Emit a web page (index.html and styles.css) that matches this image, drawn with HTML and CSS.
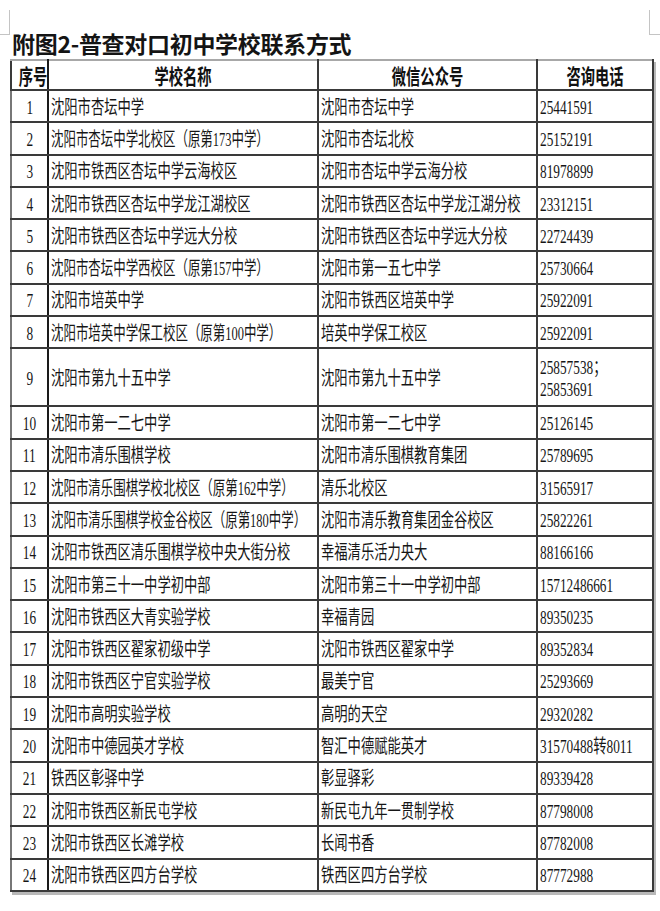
FILE: index.html
```html
<!DOCTYPE html>
<html lang="zh-CN">
<head>
<meta charset="utf-8">
<title>附图2-普查对口初中学校联系方式</title>
<link rel="stylesheet" href="styles.css">
</head>
<body>
<div class="page">
  <span class="mark mark-left"></span>
  <span class="mark mark-right"></span>
  <h1 class="title">附图2-普查对口初中学校联系方式</h1>
  <table class="sheet">
    <colgroup>
      <col class="c-no"><col class="c-name"><col class="c-wx"><col class="c-tel">
    </colgroup>
    <thead>
      <tr>
        <th><span class="h">序号</span></th>
        <th><span class="h">学校名称</span></th>
        <th><span class="h">微信公众号</span></th>
        <th><span class="h">咨询电话</span></th>
      </tr>
    </thead>
    <tbody>
      <tr><td class="no"><span class="n">1</span></td><td><span class="t">沈阳市杏坛中学</span></td><td><span class="t">沈阳市杏坛中学</span></td><td><span class="t">25441591</span></td></tr>
      <tr><td class="no"><span class="n">2</span></td><td><span class="t narrow">沈阳市杏坛中学北校区（原第173中学）</span></td><td><span class="t">沈阳市杏坛北校</span></td><td><span class="t">25152191</span></td></tr>
      <tr><td class="no"><span class="n">3</span></td><td><span class="t">沈阳市铁西区杏坛中学云海校区</span></td><td><span class="t">沈阳市杏坛中学云海分校</span></td><td><span class="t">81978899</span></td></tr>
      <tr><td class="no"><span class="n">4</span></td><td><span class="t">沈阳市铁西区杏坛中学龙江湖校区</span></td><td><span class="t">沈阳市铁西区杏坛中学龙江湖分校</span></td><td><span class="t">23312151</span></td></tr>
      <tr><td class="no"><span class="n">5</span></td><td><span class="t">沈阳市铁西区杏坛中学远大分校</span></td><td><span class="t">沈阳市铁西区杏坛中学远大分校</span></td><td><span class="t">22724439</span></td></tr>
      <tr><td class="no"><span class="n">6</span></td><td><span class="t narrow">沈阳市杏坛中学西校区（原第157中学）</span></td><td><span class="t">沈阳市第一五七中学</span></td><td><span class="t">25730664</span></td></tr>
      <tr><td class="no"><span class="n">7</span></td><td><span class="t">沈阳市培英中学</span></td><td><span class="t">沈阳市铁西区培英中学</span></td><td><span class="t">25922091</span></td></tr>
      <tr><td class="no"><span class="n">8</span></td><td><span class="t narrow">沈阳市培英中学保工校区（原第100中学）</span></td><td><span class="t">培英中学保工校区</span></td><td><span class="t">25922091</span></td></tr>
      <tr class="tall"><td class="no"><span class="n">9</span></td><td><span class="t">沈阳市第九十五中学</span></td><td><span class="t">沈阳市第九十五中学</span></td><td><span class="t">25857538；<br>25853691</span></td></tr>
      <tr><td class="no"><span class="n">10</span></td><td><span class="t">沈阳市第一二七中学</span></td><td><span class="t">沈阳市第一二七中学</span></td><td><span class="t">25126145</span></td></tr>
      <tr><td class="no"><span class="n">11</span></td><td><span class="t">沈阳市清乐围棋学校</span></td><td><span class="t">沈阳市清乐围棋教育集团</span></td><td><span class="t">25789695</span></td></tr>
      <tr><td class="no"><span class="n">12</span></td><td><span class="t narrow">沈阳市清乐围棋学校北校区（原第162中学）</span></td><td><span class="t">清乐北校区</span></td><td><span class="t">31565917</span></td></tr>
      <tr><td class="no"><span class="n">13</span></td><td><span class="t narrow">沈阳市清乐围棋学校金谷校区（原第180中学）</span></td><td><span class="t">沈阳市清乐教育集团金谷校区</span></td><td><span class="t">25822261</span></td></tr>
      <tr><td class="no"><span class="n">14</span></td><td><span class="t">沈阳市铁西区清乐围棋学校中央大街分校</span></td><td><span class="t">幸福清乐活力央大</span></td><td><span class="t">88166166</span></td></tr>
      <tr><td class="no"><span class="n">15</span></td><td><span class="t">沈阳市第三十一中学初中部</span></td><td><span class="t">沈阳市第三十一中学初中部</span></td><td><span class="t">15712486661</span></td></tr>
      <tr><td class="no"><span class="n">16</span></td><td><span class="t">沈阳市铁西区大青实验学校</span></td><td><span class="t">幸福青园</span></td><td><span class="t">89350235</span></td></tr>
      <tr><td class="no"><span class="n">17</span></td><td><span class="t">沈阳市铁西区翟家初级中学</span></td><td><span class="t">沈阳市铁西区翟家中学</span></td><td><span class="t">89352834</span></td></tr>
      <tr><td class="no"><span class="n">18</span></td><td><span class="t">沈阳市铁西区宁官实验学校</span></td><td><span class="t">最美宁官</span></td><td><span class="t">25293669</span></td></tr>
      <tr><td class="no"><span class="n">19</span></td><td><span class="t">沈阳市高明实验学校</span></td><td><span class="t">高明的天空</span></td><td><span class="t">29320282</span></td></tr>
      <tr><td class="no"><span class="n">20</span></td><td><span class="t">沈阳市中德园英才学校</span></td><td><span class="t">智汇中德赋能英才</span></td><td><span class="t">31570488转8011</span></td></tr>
      <tr><td class="no"><span class="n">21</span></td><td><span class="t">铁西区彰驿中学</span></td><td><span class="t">彰显驿彩</span></td><td><span class="t">89339428</span></td></tr>
      <tr><td class="no"><span class="n">22</span></td><td><span class="t">沈阳市铁西区新民屯学校</span></td><td><span class="t">新民屯九年一贯制学校</span></td><td><span class="t">87798008</span></td></tr>
      <tr><td class="no"><span class="n">23</span></td><td><span class="t">沈阳市铁西区长滩学校</span></td><td><span class="t">长闻书香</span></td><td><span class="t">87782008</span></td></tr>
      <tr><td class="no"><span class="n">24</span></td><td><span class="t">沈阳市铁西区四方台学校</span></td><td><span class="t">铁西区四方台学校</span></td><td><span class="t">87772988</span></td></tr>
    </tbody>
  </table>
</div>
</body>
</html>
```

FILE: styles.css
```css
* { box-sizing: border-box; }

html, body {
  margin: 0;
  padding: 0;
  background: #ffffff;
}

.page {
  position: relative;
  width: 660px;
  height: 911px;
  padding: 28px 0 0 10px;
  font-family: "Liberation Serif", "Noto Sans CJK SC", serif;
  color: #151515;
}

.mark {
  position: absolute;
  top: 10px;
  width: 10px;
  height: 25px;
  border-bottom: 1px solid #c4c4c4;
}
.mark-left {
  left: 0;
  border-right: 1px solid #c4c4c4;
}
.mark-right {
  left: 649px;
  width: 11px;
  border-left: 1px solid #c4c4c4;
}

.title {
  margin: 0 0 1px 2px;
  height: 30px;
  line-height: 30px;
  font-family: "Noto Sans CJK SC", sans-serif;
  font-size: 23px;
  font-weight: 700;
  color: #141414;
  letter-spacing: -0.3px;
}

.sheet {
  width: 642px;
  table-layout: fixed;
  border-collapse: collapse;
  border-top: 2px solid #a8a8a8;
  border-left: 2px solid #777;
  border-right: 2px solid #333;
  border-bottom: 2px solid #333;
  box-shadow: 2px 3px 0 #b8b8b8;
}

.c-no { width: 37px; }
.c-name { width: 270px; }
.c-wx { width: 219px; }
.c-tel { width: 116px; }

.sheet th,
.sheet td {
  border: 2px solid #3a3a3a;
  padding: 0;
  overflow: hidden;
  white-space: nowrap;
  vertical-align: middle;
}

.sheet th {
  height: 30px;
  text-align: center;
  border-top-color: #a8a8a8;
}

.sheet td {
  height: 32.3px;
  padding: 3px 0 0 2px;
  text-align: left;
}

.sheet td.no {
  text-align: center;
  padding-left: 0;
  border-left-color: #777;
}

.sheet tr.tall td {
  height: 58px;
}

.sheet th:first-child,
.sheet td:first-child {
  border-right: 2px solid #1a1a1a;
}

.h {
  display: inline-block;
  font-family: "Noto Sans CJK SC", sans-serif;
  font-size: 21px;
  font-weight: 700;
  line-height: 24px;
  transform: scaleX(0.68);
  transform-origin: 50% 50%;
  color: #111;
}

.t {
  display: inline-block;
  font-size: 19px;
  line-height: 22px;
  transform: scaleX(0.7);
  transform-origin: 0 50%;
  color: #161616;
}

.t.narrow {
  transform: scaleX(0.655);
}

.n {
  display: inline-block;
  font-size: 19px;
  line-height: 22px;
  transform: scaleX(0.7);
  transform-origin: 50% 50%;
  color: #161616;
}
```
